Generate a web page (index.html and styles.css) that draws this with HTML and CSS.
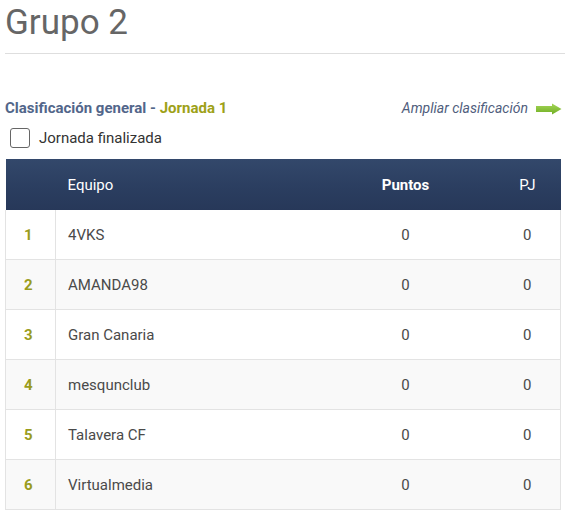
FILE: index.html
```html
<!DOCTYPE html>
<html lang="es">
<head>
<meta charset="utf-8">
<link rel="stylesheet" href="styles.css">
</head>
<body>
<div class="page">
  <h1 class="title">Grupo 2</h1>
  <div class="bar">
    <div class="heading">Clasificación general - <span class="jornada">Jornada 1</span></div>
    <a class="more">Ampliar clasificación
      <svg width="26" height="12" viewBox="0 0 26 12"><defs><linearGradient id="g" x1="0" y1="0" x2="0" y2="1"><stop offset="0" stop-color="#a6d65a"/><stop offset="1" stop-color="#6fae22"/></linearGradient></defs><path d="M0 3H16V0.5L25.5 6L16 11.5V9H0Z" fill="url(#g)"/></svg>
    </a>
  </div>
  <label class="check"><span class="box"></span>Jornada finalizada</label>
  <table class="standings">
    <thead>
      <tr><th class="pos"></th><th class="team">Equipo</th><th class="pts">Puntos</th><th class="pj">PJ</th></tr>
    </thead>
    <tbody>
      <tr><td class="pos">1</td><td class="team">4VKS</td><td class="num">0</td><td class="num pjc">0</td></tr>
      <tr><td class="pos">2</td><td class="team">AMANDA98</td><td class="num">0</td><td class="num pjc">0</td></tr>
      <tr><td class="pos">3</td><td class="team">Gran Canaria</td><td class="num">0</td><td class="num pjc">0</td></tr>
      <tr><td class="pos">4</td><td class="team">mesqunclub</td><td class="num">0</td><td class="num pjc">0</td></tr>
      <tr><td class="pos">5</td><td class="team">Talavera CF</td><td class="num">0</td><td class="num pjc">0</td></tr>
      <tr><td class="pos">6</td><td class="team">Virtualmedia</td><td class="num">0</td><td class="num pjc">0</td></tr>
    </tbody>
  </table>
</div>
</body>
</html>
```
FILE: styles.css
```css
html, body { margin: 0; padding: 0; background: #fff; }
body { font-family: Roboto, "Liberation Sans", sans-serif; }
.page { padding: 0 0 0 5px; }
.title {
  margin: 0;
  padding-top: 3px;
  font-size: 35px;
  font-weight: 400;
  line-height: 40px;
  color: #666;
  padding-bottom: 10px;
  border-bottom: 1px solid #dedede;
}
.bar {
  display: flex;
  justify-content: space-between;
  align-items: center;
  margin-top: 45px;
  height: 18px;
  padding-right: 3px;
}
.heading { font-size: 15px; font-weight: 700; color: #52668a; }
.jornada { color: #9ea118; }
.more {
  font-size: 14px;
  font-style: italic;
  color: #4f5d7c;
  display: flex;
  align-items: center;
  gap: 8px;
}
.more svg { display: block; margin-top: 1px; }
.check {
  display: flex;
  align-items: center;
  margin-top: 11px;
  margin-left: 5px;
  font-size: 15px;
  color: #333;
  height: 20px;
}
.box {
  width: 18px;
  height: 18px;
  border: 1px solid #666;
  border-radius: 3px;
  margin-right: 9px;
  display: block;
}
.standings {
  margin-top: 11px;
  width: 556px;
  border-collapse: collapse;
  font-size: 15px;
  color: #4a4a4a;
}
.standings thead tr {
  background: #2e4265;
  background-image: linear-gradient(180deg, #33486b 0%, #2b3e60 55%, #273859 100%);
}
.standings th {
  height: 51px;
  padding: 0;
  color: #fff;
  font-weight: 400;
  border: none;
  text-align: center;
}
.standings th.team { text-align: left; padding-left: 12px; }
.standings th.pts { font-weight: 700; width: 178px; }
.standings th.pj { width: 66px; }
.standings th.pos { width: 50px; }
.standings td {
  height: 49px;
  padding: 0;
  border: 1px solid #e3e3e3;
}
.standings tbody tr:first-child td { border-top: none; }
.standings tbody tr:nth-child(even) { background: #f9f9f9; }
.standings td.pos { text-align: left; padding-left: 18px; font-weight: 700; color: #9a9c1c; }
.standings td.team { padding-left: 12px; border-right: none; }
.standings td.num { text-align: center; border-left: none; border-right: none; }
.standings td.pjc { border-right: 1px solid #e3e3e3; }
```
